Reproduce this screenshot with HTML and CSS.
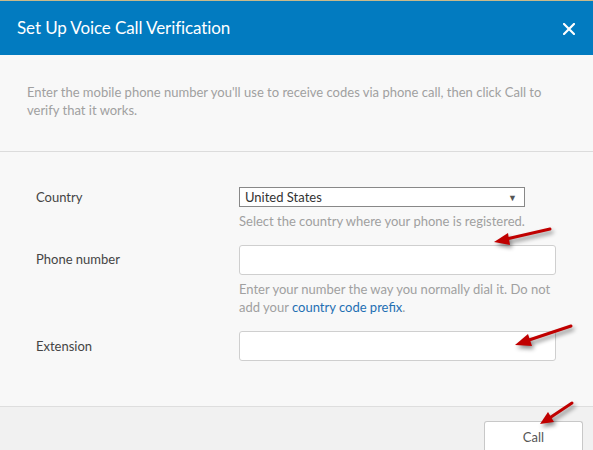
FILE: index.html
```html
<!DOCTYPE html>
<html>
<head>
<meta charset="utf-8">
<link rel="stylesheet" href="styles.css">
</head>
<body>
<div class="dialog">
  <div class="header">
    <h1 class="title">Set Up Voice Call Verification</h1>
    <span class="close" aria-label="Close">
      <svg width="12" height="12" viewBox="0 0 12 12"><path d="M1 1 L11 11 M11 1 L1 11" stroke="#fff" stroke-width="2.2" stroke-linecap="square"/></svg>
    </span>
  </div>
  <div class="intro">
    <p>Enter the mobile phone number you'll use to receive codes via phone call, then click Call to verify that it works.</p>
  </div>
  <div class="form">
    <div class="row">
      <label class="label">Country</label>
      <div class="field">
        <div class="select"><span>United States</span><span class="caret">▼</span></div>
        <p class="help">Select the country where your phone is registered.</p>
      </div>
    </div>
    <div class="row row-phone">
      <label class="label">Phone number</label>
      <div class="field">
        <div class="input"></div>
        <p class="help"><span>Enter your number the way you normally dial it. Do not</span><br><span>add your</span> <a href="#">country code prefix</a><span>.</span></p>
      </div>
    </div>
    <div class="row row-ext">
      <label class="label">Extension</label>
      <div class="field">
        <div class="input"></div>
      </div>
    </div>
  </div>
  <div class="footer">
    <button class="btn">Call</button>
  </div>
  <svg class="arrow arrow1" width="70" height="30" viewBox="0 0 70 30"><line x1="62" y1="4" x2="14" y2="15" /><polygon points="6,17 20,8 22,20"/></svg>
  <svg class="arrow arrow2" width="70" height="32" viewBox="0 0 70 32"><line x1="62" y1="4" x2="14" y2="20" /><polygon points="6,23 19,12 23,24"/></svg>
  <svg class="arrow arrow3" width="50" height="34" viewBox="0 0 50 34"><line x1="40" y1="4" x2="16" y2="20" /><polygon points="8,25 16,13 22,23"/></svg>
</div>
</body>
</html>
```
FILE: styles.css
```css
* { box-sizing: border-box; }
html, body { margin: 0; padding: 0; }
body {
  font-family: Lato, "Open Sans", Arial, sans-serif;
  background: #f8f8f8;
  width: 593px;
  height: 450px;
  overflow: hidden;
}
.dialog {
  position: relative;
  width: 593px;
  height: 450px;
  border-top: 1px solid #c9b98a;
  background: #f8f8f8;
  display: flex;
  flex-direction: column;
  overflow: hidden;
}
.header {
  flex: none;
  height: 54px;
  background: #027bc0;
  display: flex;
  align-items: center;
  justify-content: space-between;
  padding: 0 18px 2px 17px;
}
.title {
  margin: 0;
  font-size: 17px;
  font-weight: normal;
  color: #fff;
  letter-spacing: -0.1px;
}
.close { display: flex; width: 12px; height: 12px; margin-top: 4px; }
.intro {
  flex: none;
  height: 97px;
  border-bottom: 1px solid #dcdcdc;
  padding: 28px 24px 0 27px;
}
.intro p {
  margin: 0;
  font-size: 13px;
  line-height: 18px;
  color: #a0a0a0;
}
.form {
  flex: none;
  height: 255px;
  padding-top: 35px;
  border-bottom: 1px solid #dedede;
}
.row {
  display: grid;
  grid-template-columns: 203px 1fr;
  padding-left: 36px;
}
.label {
  font-size: 13px;
  color: #444;
  padding-top: 2px;
  line-height: 16px;
}
.row-phone { margin-top: 15px; }
.row-phone .label { padding-top: 6px; }
.row-ext { margin-top: 15px; }
.row-ext .label { padding-top: 7px; }
.field { width: 317px; }
.select {
  width: 286px;
  height: 20px;
  border: 1px solid #888;
  background: #fff;
  display: flex;
  align-items: center;
  justify-content: space-between;
  padding: 0 7px 0 5px;
  font-size: 13px;
  color: #333;
}
.caret { font-size: 9px; color: #555; }
.help {
  margin: 5px 0 0;
  font-size: 13px;
  line-height: 18px;
  color: #a0a0a0;
}
.help a { color: #1f6fb3; text-decoration: none; }
.input {
  width: 317px;
  height: 30px;
  background: #fff;
  border: 1px solid #cfcfcf;
  border-radius: 3px;
}
.footer {
  flex: 1;
  background: #f1f1f1;
  display: flex;
  justify-content: flex-end;
  align-items: flex-start;
  padding: 14px 10px 0 0;
}
.btn {
  width: 99px;
  height: 29px;
  background: #fff;
  border: 1px solid #c8c8c8;
  border-bottom: none;
  border-radius: 3px 3px 0 0;
  font-family: inherit;
  font-size: 13px;
  color: #555;
  padding: 2px 0 0;
}
.arrow {
  position: absolute;
  overflow: visible;
  filter: drop-shadow(2px 3px 2px rgba(0,0,0,0.45));
}
.arrow line { stroke: #c00000; stroke-width: 3; stroke-linecap: round; }
.arrow polygon { fill: #c00000; }
.arrow1 { left: 488px; top: 224px; }
.arrow2 { left: 509px; top: 321px; }
.arrow3 { left: 532px; top: 398px; }
```
